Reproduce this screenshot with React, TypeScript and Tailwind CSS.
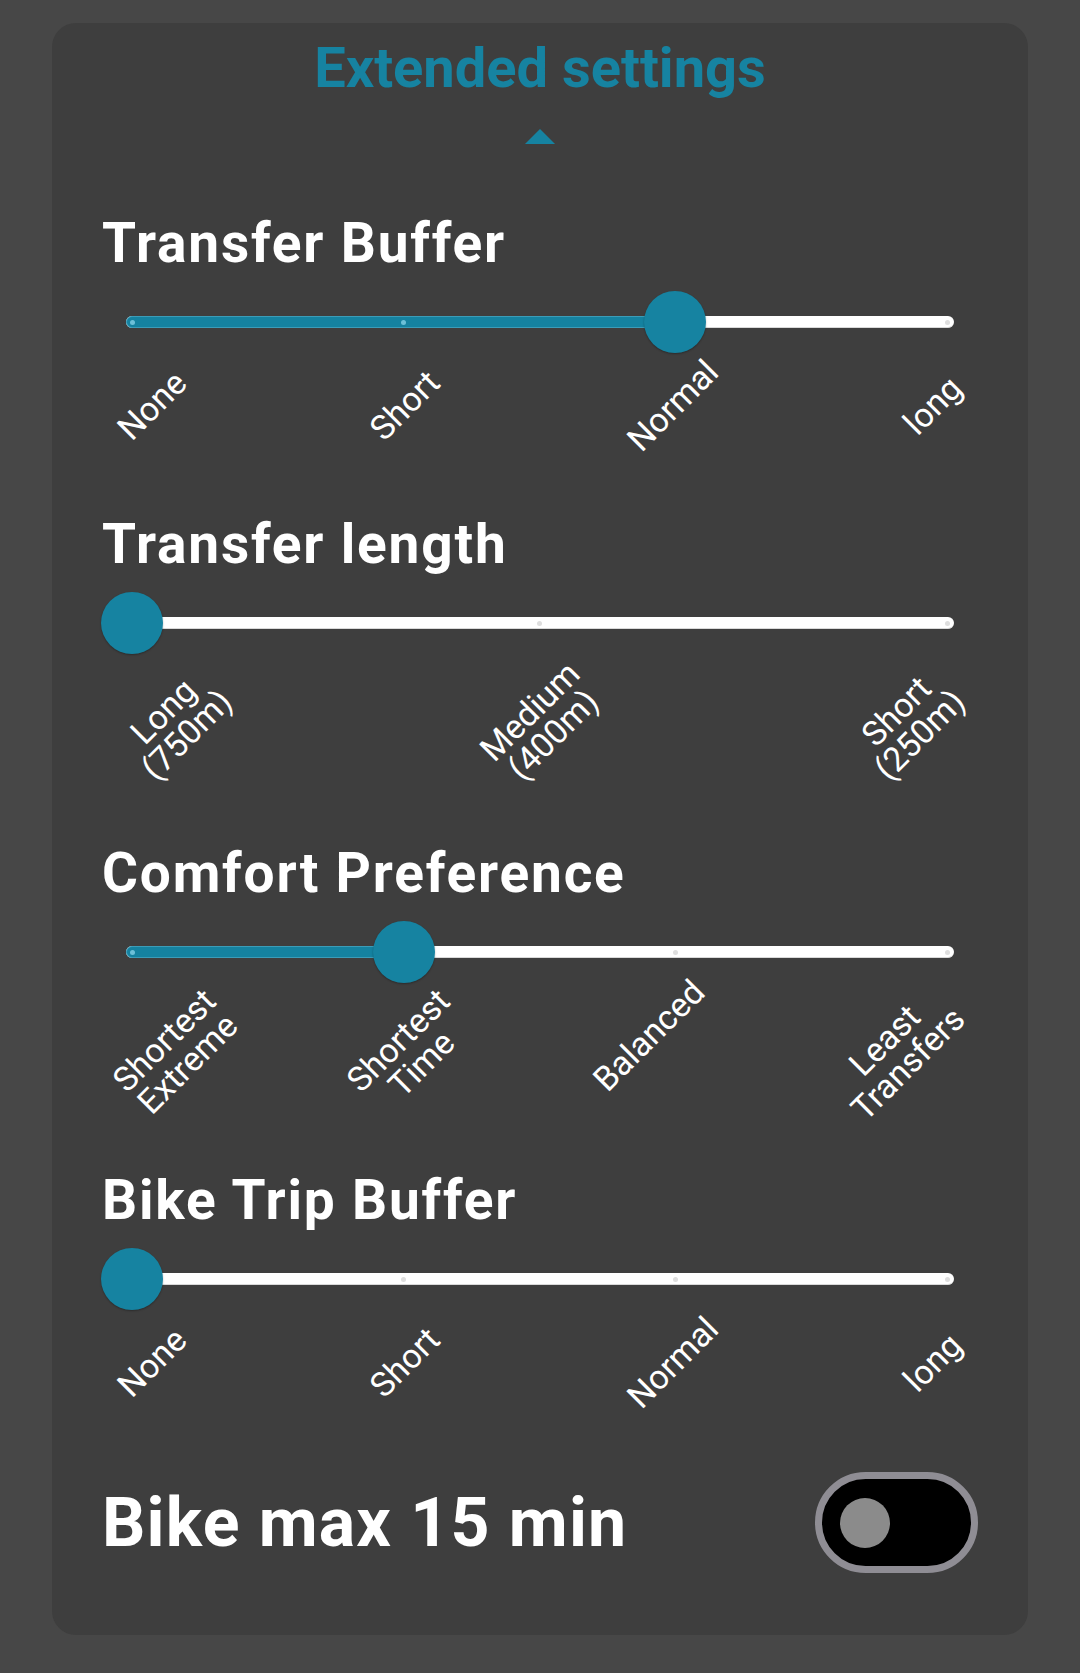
const TEAL = '#1683a1';

type SliderProps = {
  title: string;
  labels: string[][];
  value: number;
  rowClass: string;
};

function StepSlider({ title, labels, value, rowClass }: SliderProps) {
  const n = labels.length;
  const span = 815;
  const tick = (i: number) => 6 + (span * i) / (n - 1);
  const pos = tick(value);

  return (
    <div>
      <h2 className="ml-[2px] text-[55px] font-bold leading-none tracking-[1.8px] text-white">{title}</h2>
      <div className="relative mt-[20px] mx-[26px] h-[62px]">
        <div className="absolute inset-x-0 top-[25px] h-[12px] rounded-full bg-white border-b border-[#d9d9d9]" />
        <div
          className="absolute left-0 top-[25px] h-[12px] rounded-l-full bg-[#1582a0] border border-[#3b9cb8]"
          style={{ width: pos }}
        />
        {labels.map((_, i) =>
          i === value ? null : (
            <div
              key={i}
              className={`absolute top-[29px] h-[5px] w-[5px] -ml-[2.5px] rounded-full ${
                i < value ? 'bg-[#6cc0d8]' : 'bg-[#dedede]'
              }`}
              style={{ left: tick(i) }}
            />
          )
        )}
        <div
          className="absolute top-0 h-[62px] w-[62px] -ml-[31px] rounded-full bg-[#1683a1] shadow-[0_1px_2px_rgba(0,0,0,0.3)]"
          style={{ left: pos }}
        />
      </div>
      <div className={`flex justify-between items-start pt-[36px] ${rowClass}`}>
        {labels.map((lines, i) => (
          <div
            key={i}
            className="-rotate-45 text-center text-[34px] leading-[0.98] text-white"
          >
            {lines.map((l, j) => (
              <div key={j}>{l}</div>
            ))}
          </div>
        ))}
      </div>
    </div>
  );
}

function Toggle() {
  return (
    <div className="flex h-[101px] w-[163px] items-center rounded-full border-[7px] border-[#8f8d94] bg-black pl-[18px]">
      <div className="h-[50px] w-[50px] rounded-full bg-[#8b8b8b]" />
    </div>
  );
}

export default function App() {
  const buffer = [['None'], ['Short'], ['Normal'], ['long']];
  return (
    <div
      className="min-h-screen bg-[#474747] px-[52px] pt-[23px] pb-[39px]"
      style={{ fontFamily: 'Roboto, "Noto Sans", sans-serif' }}
    >
      <div className="rounded-[24px] bg-[#3e3e3e] px-[48px] pt-[17px] pb-[62px]">
        <h1 className="text-center text-[56px] font-bold leading-none text-[#1683a1]">
          Extended settings
        </h1>
        <div className="mt-[33px] flex justify-center">
          <svg width="30" height="15" viewBox="0 0 30 15">
            <polygon points="15,0 30,15 0,15" fill={TEAL} />
          </svg>
        </div>

        <div className="mt-[72px]">
          <StepSlider
            title="Transfer Buffer"
            labels={buffer}
            value={2}
            rowClass="h-[164px] pl-[12px] pr-[14px]"
          />
          <StepSlider
            title="Transfer length"
            labels={[
              ['Long', '(750m)'],
              ['Medium', '(400m)'],
              ['Short', '(250m)'],
            ]}
            value={0}
            rowClass="h-[192px] pl-[20px] pr-[16px]"
          />
          <StepSlider
            title="Comfort Preference"
            labels={[
              ['Shortest', 'Extreme'],
              ['Shortest', 'Time'],
              ['Balanced'],
              ['Least', 'Transfers'],
            ]}
            value={1}
            rowClass="h-[190px] pl-[12px] pr-[12px]"
          />
          <StepSlider
            title="Bike Trip Buffer"
            labels={buffer}
            value={0}
            rowClass="h-[162px] pl-[12px] pr-[14px]"
          />
        </div>

        <div className="flex items-center justify-between pr-[2px]">
          <span className="ml-[2px] text-[68px] font-bold leading-none tracking-[1.2px] text-white">
            Bike max 15 min
          </span>
          <Toggle />
        </div>
      </div>
    </div>
  );
}
